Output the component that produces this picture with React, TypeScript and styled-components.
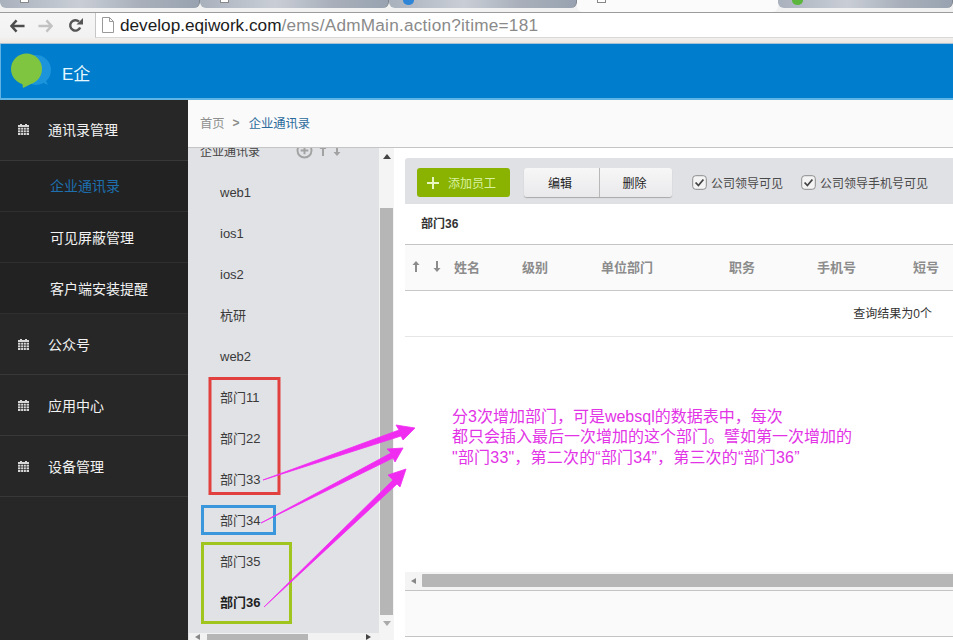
import React from "react";
import styled, { createGlobalStyle } from "styled-components";

const Global = createGlobalStyle`
  html, body { margin: 0; padding: 0; background: #fff; overflow: hidden; }
  body { font-family: "Liberation Sans", "Noto Sans CJK SC", sans-serif; }
  * { box-sizing: border-box; }
`;
const Page = styled.div`
  position: relative; width: 953px; height: 640px; overflow: hidden;
  display: flex; flex-direction: column;
`;
const TabStrip = styled.div`
  height: 13px; flex: none; display: flex; align-items: flex-start; background: #f1f1f1;
  border-bottom: 1px solid #9c9c9c; overflow: hidden;
`;
const Tab = styled.div<{ $w: number; $active?: boolean }>`
  width: ${p => p.$w}px; flex: none; position: relative;
  height: ${p => (p.$active ? 12 : 8)}px;
  background: ${p => (p.$active ? "#fbfbfb" : "linear-gradient(90deg,#a9b1bd,#c9ced6 40%,#a9b0bb 70%,#98a2b0)")};
  border-right: ${p => (p.$active ? "none" : "1px solid #7f858e")};
  border-radius: 0 0 6px 6px;
`;
const TabFile = styled.span`
  position: absolute; left: 20px; top: -6px; width: 9px; height: 9px; background: #fff; border: 1px solid #888;
`;
const TabDot = styled.span<{ $c: string }>`
  position: absolute; left: 14px; top: -4px; width: 11px; height: 9px; border-radius: 50%; background: ${p => p.$c};
`;
const Toolbar = styled.div`
  height: 31px; flex: none; display: flex; align-items: flex-start;
  background: linear-gradient(#f6f6f6,#f2f2f2 80%,#ede6de); padding-left: 10px;
  border-bottom: 1px solid #a9c1d6;
`;
const NavGroup = styled.div`
  width: 85px; height: 25px; flex: none; display: flex; align-items: center;
  & > svg:nth-child(2) { margin-left: 13px; }
  & > svg:nth-child(3) { margin-left: 15px; }
`;
const Omnibox = styled.div`
  flex: 1; height: 25px; background: #fff; border-left: 1px solid #c6c6c6; border-bottom: 1px solid #d8d8d8;
  display: flex; align-items: center; padding-left: 6px; gap: 6px;
  font-size: 17.2px; color: #8a8a8a; white-space: nowrap;
`;
const Host = styled.span` color: #1c1c1c; `;
const UrlRest = styled.span` letter-spacing: .24px; `;
const Header = styled.header`
  height: 56px; flex: none; background: #007dcc; border-bottom: 2px solid #5fb4e6; border-left: 1px solid #63b2e4;
  display: flex; align-items: center; padding-left: 10px; gap: 10px;
`;
const Brand = styled.span` color: #e6f8ff; font-size: 17px; margin-top: 2px; `;
const Body = styled.div` flex: 1; min-height: 0; display: flex; `;
const Sidebar = styled.nav` width: 188px; flex: none; background: #272727; `;
const NavItem = styled.div<{ $h: number; $lift?: boolean }>`
  height: ${p => p.$h}px; display: flex; align-items: center; padding-left: 18px; gap: 19px;
  padding-bottom: ${p => (p.$lift ? 2 : 0)}px;
  color: #f2f2f2; font-size: 14px; border-bottom: 1px solid #383838;
`;
const SubItem = styled.div<{ $active?: boolean; $h: number }>`
  height: ${p => p.$h}px; display: flex; align-items: center; padding-left: 50px;
  padding-bottom: ${p => (p.$active ? 2 : 0)}px;
  background: #222; color: ${p => (p.$active ? "#1d6fae" : "#f2f2f2")}; font-size: 14px;
  border-bottom: 1px solid #2f2f2f;
`;
const Main = styled.main` flex: 1; min-width: 0; display: flex; flex-direction: column; background: #fff; `;
const Crumbs = styled.div`
  height: 48px; flex: none; background: #fafafa; border-bottom: 1px solid #c4c4c4;
  display: flex; align-items: center; padding: 0 0 1px 12px; font-size: 12.3px; color: #8f8f8f;
`;
const CrumbSep = styled.span` color: #8a8a8a; font-weight: 700; font-size: 12px; margin: 0 9px 0 8px; `;
const CrumbNow = styled.span` color: #2c6a9c; `;
const Panes = styled.div` flex: 1; min-height: 0; display: flex; `;
const Tree = styled.aside`
  width: 191px; flex: none; background: #e1e2e6; position: relative; overflow: hidden;
  padding: 0 0 0 32px;
`;
const TreeHead = styled.div`
  position: absolute; left: 12px; top: -6px; display: flex; align-items: center; font-size: 12px; color: #444; gap: 36px;
`;
const HeadIcons = styled.span` display: flex; align-items: center; gap: 6px; `;
const TreeList = styled.div` padding-top: 24px; display: flex; flex-direction: column; `;
const TreeRow = styled.div<{ $bold?: boolean; $cjk?: boolean }>`
  height: 41px; display: flex; align-items: center; font-size: 13px;
  padding-bottom: ${p => (p.$cjk ? 2 : 0)}px;
  font-weight: ${p => (p.$bold ? 700 : 400)};
  color: ${p => (p.$bold ? "#1f1f1f" : "#3a3a3a")};
`;
const VScroll = styled.div`
  width: 15px; flex: none; background: #f4f4f4; display: flex; flex-direction: column; align-items: center;
`;
const VThumb = styled.div` width: 13px; flex: 1; background: #b6b6b6; margin: 60px 0 25px; `;
const Arrow = styled.span<{ $dir: "up" | "down" | "left" | "right"; $c?: string }>`
  position: absolute; width: 0; height: 0;
  ${p => p.$dir === "up" && `border: 4px solid transparent; border-top: 0; border-bottom: 5px solid ${p.$c ?? "#444"};`}
  ${p => p.$dir === "down" && `border: 4px solid transparent; border-bottom: 0; border-top: 5px solid ${p.$c ?? "#aaa"};`}
  ${p => p.$dir === "left" && `border: 3px solid transparent; border-left: 0; border-right: 5px solid ${p.$c ?? "#888"};`}
  ${p => p.$dir === "right" && `border: 3px solid transparent; border-right: 0; border-left: 5px solid ${p.$c ?? "#444"};`}
`;
const VScrollWrap = styled.div` position: relative; display: flex; width: 15px; flex: none; `;
const Gap = styled.div` width: 11px; flex: none; background: #fff; `;
const Content = styled.section` flex: 1; min-width: 0; display: flex; flex-direction: column; padding-top: 10px; `;
const ActionBar = styled.div`
  height: 46px; flex: none; background: #e0e1e5; display: flex; align-items: center; padding: 3px 0 0 12px;
  border-radius: 3px 0 0 0;
`;
const AddBtn = styled.div`
  width: 93px; height: 29px; background: #8ab200; border-radius: 3px; display: flex; align-items: center;
  padding-left: 10px; gap: 9px; color: #d9f2a0; font-size: 12px;
`;
const BtnGroup = styled.div`
  margin-left: 14px; display: flex; height: 29px; border-radius: 3px; background: linear-gradient(#f7f7f7,#e9e9ec);
  box-shadow: 0 1px 1px #a8a8a8;
`;
const GrpBtn = styled.div`
  width: 75px; padding-right: 3px; display: flex; align-items: center; justify-content: center; font-size: 12px; color: #222;
  & + & { border-left: 1px solid #b8b8b8; width: 73px; }
`;
const Check = styled.label`
  display: flex; align-items: center; gap: 4px; font-size: 12px; color: #4a4a4a; margin-left: 20px;
  & + & { margin-left: 18px; }
`;
const Title = styled.div`
  height: 41px; flex: none; display: flex; align-items: center; padding: 0 0 3px 16px; font-size: 12px; font-weight: 700; color: #333;
  border-bottom: 1px solid #c4c4c4;
`;
const THead = styled.div`
  height: 46px; flex: none; background: #fafafa; border-bottom: 1px solid #c8c8c8; position: relative;
  display: flex; align-items: center; font-size: 13px; font-weight: 700; color: #8c8c8c; padding: 0 0 3px 7px;
`;
const Th = styled.span<{ $w: number }>` width: ${p => p.$w}px; flex: none; `;
const SortIcons = styled.span` width: 42px; flex: none; display: flex; gap: 13px; `;
const Result = styled.div`
  height: 46px; flex: none; border-bottom: 1px solid #e6e6e6; display: flex; align-items: center; justify-content: flex-end;
  padding: 0 21px 2px 0; font-size: 12px; color: #333;
`;
const Empty = styled.div` flex: 1; min-height: 0; `;
const HScroll = styled.div`
  height: 19px; flex: none; background: #f4f4f4; border-bottom: 1px solid #c4c4c4; position: relative; padding: 2px 0 3px 17px;
`;
const HThumb = styled.div` height: 13px; background: #b6b6b6; border-radius: 1px 0 0 1px; `;
const Footer = styled.div` height: 46px; flex: none; background: #fafafa; border-bottom: 1px solid #c4c4c4; margin-bottom: 3px; `;
const BottomScroll = styled.div`
  position: absolute; left: 189px; bottom: 0; width: 191px; height: 7px; background: #f2f2f2;
`;
const BottomThumb = styled.div` position: absolute; left: 18px; top: 1px; width: 101px; height: 6px; background: #b6b6b6; `;
const Note = styled.div`
  position: absolute; left: 452px; top: 407px; color: #e233e6; font-size: 16px; line-height: 20.3px; white-space: nowrap;
`;
const NoteWide = styled.span` letter-spacing: .2px; `;
const Overlay = styled.svg` position: absolute; inset: 0; pointer-events: none; `;

const Cal = () => (
  <svg width="11" height="11" viewBox="0 0 11 11">
    <rect x="0" y="1" width="11" height="10" fill="#d8d8d8" />
    <rect x="2" y="0" width="2" height="2" fill="#d8d8d8" />
    <rect x="7" y="0" width="2" height="2" fill="#d8d8d8" />
    <path d="M0 3.5h11M0 6h11M0 8.5h11M2.7 3v8M5.5 3v8M8.3 3v8" stroke="#272727" strokeWidth=".7" />
  </svg>
);
const SortArrow = ({ up, color = "#8c8c8c" }: { up?: boolean; color?: string }) => (
  <svg width="8" height="13" viewBox="0 0 8 13">
    <path d={up ? "M4 1L7.5 5H5V12H3V5H.5Z" : "M4 12L7.5 8H5V1H3V8H.5Z"} fill={color} />
  </svg>
);
const CheckBox = () => (
  <svg width="15" height="15" viewBox="0 0 15 15">
    <rect x=".7" y=".7" width="13.6" height="13.6" rx="3" fill="#f4f4f4" stroke="#8d8d8d" />
    <path d="M3.6 7.5l2.8 3 5-6" fill="none" stroke="#444" strokeWidth="1.8" />
  </svg>
);
const Logo = () => (
  <svg width="41" height="36" viewBox="0 0 41 36">
    <circle cx="25" cy="17" r="15" fill="#1b94dc" />
    <path d="M28 28l9 4-4-8z" fill="#1b94dc" />
    <path d="M11 29l1 6 8-4z" fill="#7dc242" />
    <circle cx="15.500" cy="16" r="15.5" fill="#80c540" />
  </svg>
);
const BackIcon = ({ color }: { color: string }) => (
  <svg width="15" height="14" viewBox="0 0 16 14">
    <path d="M7 1L1.5 7 7 13M2 7h13.5" fill="none" stroke={color} strokeWidth="2.6" />
  </svg>
);
const ForwardIcon = ({ color }: { color: string }) => (
  <svg width="15" height="14" viewBox="0 0 16 14">
    <path d="M9 1l5.500 6L9 13M14 7H.5" fill="none" stroke={color} strokeWidth="2.6" />
  </svg>
);
const Reload = () => (
  <svg width="15" height="15" viewBox="0 0 15 15">
    <path d="M12.2 9.500A5.200 5.200 0 1 1 11 3.600" fill="none" stroke="#555" strokeWidth="2.4" />
    <path d="M8.500 6.500H15V0Z" fill="#555" />
  </svg>
);
const FileIcon = () => (
  <svg width="12" height="16" viewBox="0 0 12 16">
    <path d="M.5.5h7l4 4v11H.5Z" fill="#fff" stroke="#999" />
    <path d="M7.500.5v4h4" fill="none" stroke="#999" />
  </svg>
);
const PlusCircle = () => (
  <svg width="17" height="17" viewBox="0 0 16 16">
    <circle cx="8" cy="8" r="6.600" fill="none" stroke="#a2a2a2" strokeWidth="1.8" />
    <path d="M8 4.400v7.200M4.400 8h7.200" stroke="#a2a2a2" strokeWidth="1.8" />
  </svg>
);
const PlusIcon = () => (
  <svg width="12" height="12" viewBox="0 0 12 12">
    <path d="M6 0v12M0 6h12" stroke="#e8f7c0" strokeWidth="2" />
  </svg>
);

const navA = ["可见屏蔽管理", "客户端安装提醒"];
const trees: [string, boolean][] = [
  ["web1", false], ["ios1", false], ["ios2", false], ["杭研", true], ["web2", false],
  ["部门11", true], ["部门22", true], ["部门33", true], ["部门34", true], ["部门35", true],
];
const cols: [string, number][] = [["姓名", 68], ["级别", 79], ["单位部门", 128], ["职务", 88], ["手机号", 96], ["短号", 40]];

export default function App() {
  return (
    <Page>
      <Global />
      <TabStrip>
        <Tab $w={200}><TabFile /></Tab>
        <Tab $w={189}><TabFile /></Tab>
        <Tab $w={188}><TabDot $c="#2f86d6" /></Tab>
        <Tab $w={201} $active><TabFile /></Tab>
        <Tab $w={175}><TabDot $c="#5cb53c" /></Tab>
      </TabStrip>
      <Toolbar>
        <NavGroup>
          <BackIcon color="#4c4c4c" />
          <ForwardIcon color="#c2c2c2" />
          <Reload />
        </NavGroup>
        <Omnibox>
          <FileIcon />
          <span><Host>develop.eqiwork.com</Host><UrlRest>/ems/AdmMain.action?itime=181</UrlRest></span>
        </Omnibox>
      </Toolbar>
      <Header>
        <Logo />
        <Brand>E企</Brand>
      </Header>
      <Body>
        <Sidebar>
          <NavItem $h={61} $lift><Cal />通讯录管理</NavItem>
          <SubItem $h={51} $active>企业通讯录</SubItem>
          {navA.map(t => <SubItem key={t} $h={51}>{t}</SubItem>)}
          <NavItem $h={61}><Cal />公众号</NavItem>
          <NavItem $h={61}><Cal />应用中心</NavItem>
          <NavItem $h={61}><Cal />设备管理</NavItem>
        </Sidebar>
        <Main>
          <Crumbs>
            <span>首页</span><CrumbSep>&gt;</CrumbSep><CrumbNow>企业通讯录</CrumbNow>
          </Crumbs>
          <Panes>
            <Tree>
              <TreeHead>
                企业通讯录
                <HeadIcons><PlusCircle /><SortArrow up color="#a2a2a2" /><SortArrow color="#a2a2a2" /></HeadIcons>
              </TreeHead>
              <TreeList>
                {trees.map(([t, c]) => <TreeRow key={t} $cjk={c}>{t}</TreeRow>)}
                <TreeRow $bold $cjk>部门36</TreeRow>
              </TreeList>
            </Tree>
            <VScrollWrap>
              <VScroll><VThumb /></VScroll>
              <Arrow $dir="up" style={{ left: 4, top: 6 }} />
              <Arrow $dir="down" style={{ left: 4, bottom: 14 }} />
            </VScrollWrap>
            <Gap />
            <Content>
              <ActionBar>
                <AddBtn><PlusIcon />添加员工</AddBtn>
                <BtnGroup><GrpBtn>编辑</GrpBtn><GrpBtn>删除</GrpBtn></BtnGroup>
                <Check><CheckBox />公司领导可见</Check>
                <Check><CheckBox />公司领导手机号可见</Check>
              </ActionBar>
              <Title>部门36</Title>
              <THead>
                <SortIcons><SortArrow up /><SortArrow /></SortIcons>
                {cols.map(([t, w]) => <Th key={t} $w={w}>{t}</Th>)}
              </THead>
              <Result>查询结果为0个</Result>
              <Empty />
              <HScroll>
                <Arrow $dir="left" style={{ left: 6, top: 6 }} />
                <HThumb />
              </HScroll>
              <Footer />
            </Content>
          </Panes>
        </Main>
      </Body>
      <BottomScroll>
        <Arrow $dir="left" style={{ left: 6, top: 1 }} />
        <BottomThumb />
        <Arrow $dir="right" style={{ left: 177, top: 1 }} />
      </BottomScroll>
      <Note>
        分3次增加部门，可是websql的数据表中，每次<br />
        都只会插入最后一次增加的这个部门。譬如第一次增加的<br />
        <NoteWide>"部门33"，第二次的“部门34”，第三次的“部门36”</NoteWide>
      </Note>
      <Overlay width="953" height="640" viewBox="0 0 953 640">
        <rect x="210" y="378.500" width="69" height="115" fill="none" stroke="#e2403f" strokeWidth="3" />
        <rect x="202.500" y="506.500" width="72" height="27" fill="none" stroke="#3b97dc" strokeWidth="3" />
        <rect x="202.500" y="543.500" width="88" height="79" fill="none" stroke="#9fc51e" strokeWidth="3" />
        <path d="M263 480L399 430L396 425L415 428L403 440L401 436Z" fill="#f12cf1" stroke="#f12cf1" strokeWidth=".8" />
        <path d="M261 523L391 453L387 449L403 448L395 462L393 458Z" fill="#f12cf1" stroke="#f12cf1" strokeWidth=".8" />
        <path d="M264 607L393 480L388 475L406 469L400 487L397 484Z" fill="#f12cf1" stroke="#f12cf1" strokeWidth=".8" />
      </Overlay>
    </Page>
  );
}
